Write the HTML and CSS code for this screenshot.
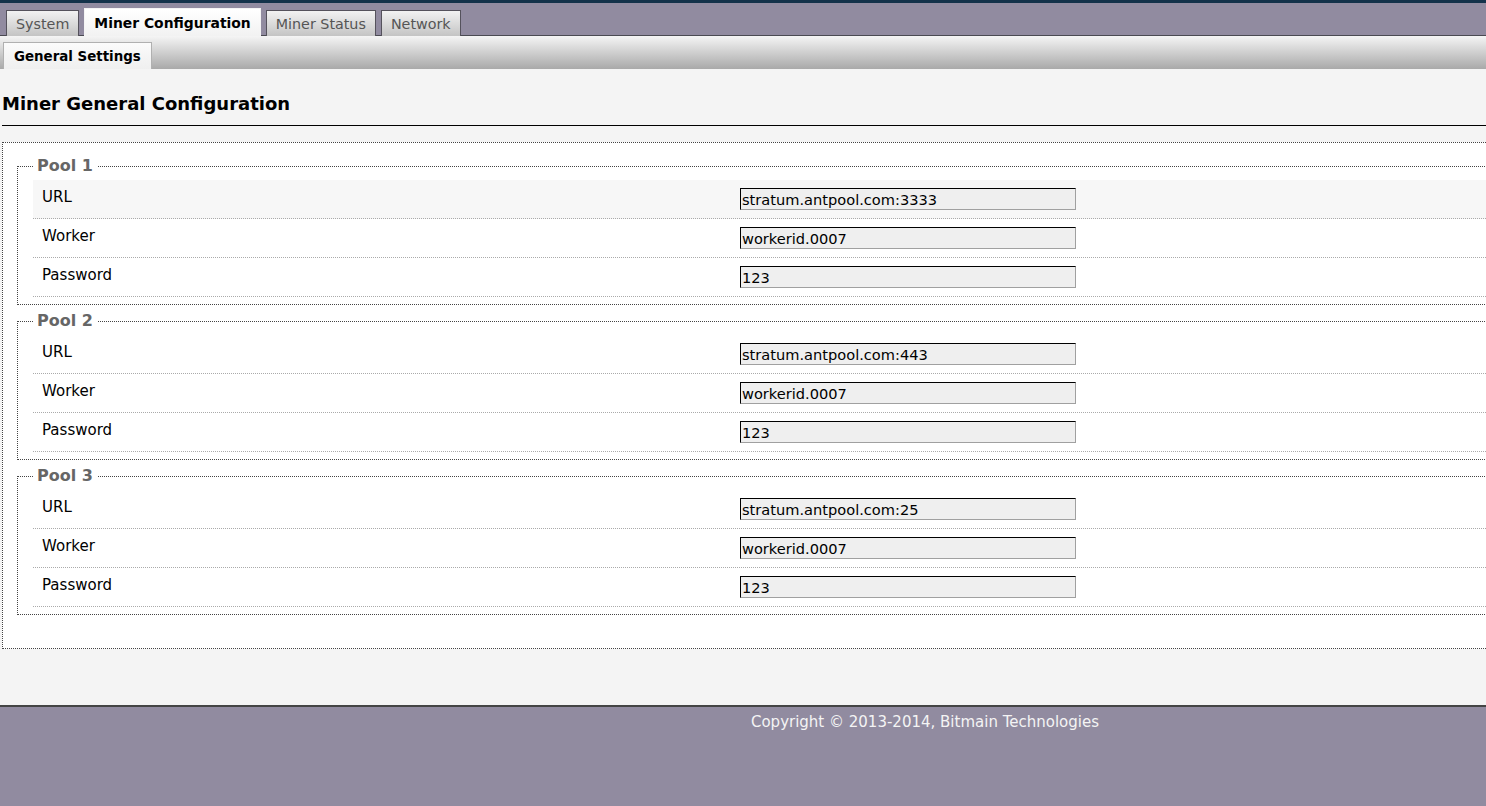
FILE: index.html
```html
<!DOCTYPE html>
<html>
<head>
	<title>Miner Configuration</title>
	<link rel="stylesheet" href="styles.css">
</head>
<body>
	<div class="topline"></div>
	<ul class="tabs">
		<li><a href="#">System</a></li>
		<li class="active"><a href="#">Miner Configuration</a></li>
		<li><a href="#">Miner Status</a></li>
		<li><a href="#">Network</a></li>
	</ul>
	<ul class="subtabs">
		<li class="active"><a href="#">General Settings</a></li>
	</ul>

	<div class="content">
		<h2>Miner General Configuration</h2>

		<fieldset class="outer">
			<fieldset class="pool">
				<legend>Pool 1</legend>
				<div class="row hover"><span class="label">URL</span><input type="text" value="stratum.antpool.com:3333"></div>
				<div class="row"><span class="label">Worker</span><input type="text" value="workerid.0007"></div>
				<div class="row"><span class="label">Password</span><input type="text" value="123"></div>
			</fieldset>

			<fieldset class="pool">
				<legend>Pool 2</legend>
				<div class="row"><span class="label">URL</span><input type="text" value="stratum.antpool.com:443"></div>
				<div class="row"><span class="label">Worker</span><input type="text" value="workerid.0007"></div>
				<div class="row"><span class="label">Password</span><input type="text" value="123"></div>
			</fieldset>

			<fieldset class="pool">
				<legend>Pool 3</legend>
				<div class="row"><span class="label">URL</span><input type="text" value="stratum.antpool.com:25"></div>
				<div class="row"><span class="label">Worker</span><input type="text" value="workerid.0007"></div>
				<div class="row"><span class="label">Password</span><input type="text" value="123"></div>
			</fieldset>
		</fieldset>
	</div>

	<div class="footer">Copyright &copy; 2013-2014, Bitmain Technologies</div>
</body>
</html>
```

FILE: styles.css
```css
body {
	margin: 0;
	padding: 0;
	background-color: #f4f4f4;
	font-family: "DejaVu Sans", Verdana, sans-serif;
	font-size: 15px;
	color: #000;
	overflow: hidden;
}

.topline {
	height: 3px;
	background-color: #13324a;
}

/* main tabs */
.tabs {
	list-style: none;
	margin: 0;
	padding: 0 0 0 6px;
	height: 32px;
	background-color: #918ba0;
	border-bottom: 1px solid #4a4a52;
	display: flex;
	align-items: flex-end;
	gap: 5px;
}

.tabs li {
	height: 25px;
	margin-bottom: -1px;
	border: 1px solid #55525c;
	border-bottom: none;
	background: linear-gradient(#f2f2f2, #c4c4c4);
}

.tabs li a {
	display: block;
	padding: 0 9px;
	line-height: 26px;
	color: #555;
	text-decoration: none;
	font-size: 14.3px;
}

.tabs li.active {
	height: 27px;
	border-color: #f4f4f4;
	background: linear-gradient(#ffffff, #f2f2f2);
}

.tabs li.active a {
	color: #000;
	font-weight: bold;
	font-size: 13.9px;
	padding: 0 9px;
	line-height: 28px;
}

/* sub tabs */
.subtabs {
	list-style: none;
	margin: 0;
	padding: 0 0 0 3px;
	height: 33px;
	background: linear-gradient(#f5f5f5, #a9a9a9);
	display: flex;
	align-items: flex-end;
}

.subtabs li {
	height: 26px;
	border: 1px solid #b0b0b0;
	border-bottom: none;
	background: linear-gradient(#fbfbfb, #efefef);
}

.subtabs li a {
	display: block;
	padding: 0 10px;
	line-height: 27px;
	font-size: 13.4px;
	font-weight: bold;
	color: #000;
	text-decoration: none;
}

/* page content */
.content {
	padding: 0 0 56px 2px;
	overflow: hidden;
}

h2 {
	margin: 0;
	padding: 22px 0 8px;
	line-height: 26px;
	font-size: 18px;
	font-weight: bold;
	border-bottom: 1px solid #000;
}

fieldset {
	margin: 0;
	min-width: 0;
}

.outer {
	margin: 16px -20px 0 0;
	padding: 13px 0 27px 14px;
	border: 1px dotted #444;
	background-color: #fff;
}

.pool {
	margin: 0 0 6px 0;
	padding: 4px 0 7px 15px;
	border: 1px dotted #444;
}

.pool legend {
	padding: 0 4px;
	font-weight: bold;
	font-size: 16px;
	line-height: 20px;
	color: #666;
}

.row {
	display: grid;
	grid-template-columns: 707px 336px;
	align-items: center;
	height: 38px;
	border-bottom: 1px dotted #aaa;
}

.row.hover {
	background-color: #f7f7f7;
}

.row .label {
	padding-left: 9px;
	margin-top: -5px;
}

.row input {
	box-sizing: border-box;
	width: 336px;
	height: 22px;
	margin: 0;
	padding: 0 1px;
	border-top: 1px solid #000;
	border-left: 1px solid #000;
	border-right: 1px solid #a0a0a0;
	border-bottom: 1px solid #a0a0a0;
	background-color: #efefef;
	font-family: "DejaVu Sans", Verdana, sans-serif;
	font-size: 14.6px;
	color: #000;
}

.footer {
	height: 101px;
	border-top: 2px solid #444;
	background-color: #918ba0;
	color: #f4f4f4;
	font-size: 15px;
	padding: 6px 0 0 364px;
	text-align: center;
	box-sizing: border-box;
}
```
